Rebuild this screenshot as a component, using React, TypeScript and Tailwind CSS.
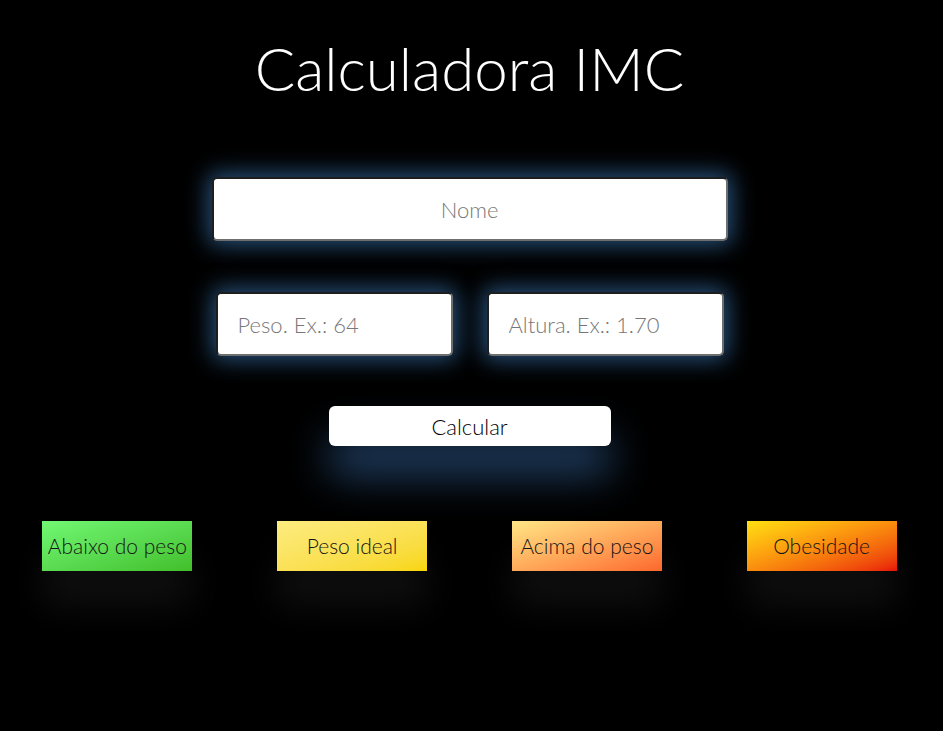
import React from 'react';

const categorias = [
  { label: 'Abaixo do peso', cls: 'bg-gradient-to-br from-[#72f873] to-[#42bf29]' },
  { label: 'Peso ideal', cls: 'bg-gradient-to-br from-[#fdec7f] to-[#f8d600]' },
  { label: 'Acima do peso', cls: 'bg-gradient-to-br from-[#ffe686] to-[#fb672c]' },
  { label: 'Obesidade', cls: 'bg-gradient-to-br from-[#fde012] to-[#e80a0a]' },
];

const inputCls =
  'h-[64px] rounded-[5px] border-2 border-t-[#1e1e1e] border-l-[#1e1e1e] border-b-[#6e6e6e] border-r-[#6e6e6e] bg-white text-[22px] text-black placeholder:text-[#777] outline-none shadow-[0_0_22px_4px_rgba(55,115,175,0.7)]';

export default function App() {
  return (
    <div className="min-h-[731px] w-full bg-black font-['Lato','Noto_Sans',sans-serif] font-light text-white overflow-hidden">
      <div className="w-[939px]">
        {/* Title */}
        <h1 className="pt-[30px] text-center text-[60px] leading-[76px] font-light">
          Calculadora IMC
        </h1>

        {/* Form */}
        <div className="mt-[71px] flex flex-col items-center">
          <input type="text" placeholder="Nome" className={`w-[516px] text-center ${inputCls}`} />

          <div className="mt-[51px] flex gap-[34px]">
            <input type="text" placeholder="Peso. Ex.: 64" className={`w-[237px] pl-[20px] ${inputCls}`} />
            <input type="text" placeholder="Altura. Ex.: 1.70" className={`w-[237px] pl-[20px] ${inputCls}`} />
          </div>

          <button
            type="button"
            className="mt-[50px] w-[282px] h-[40px] rounded-[6px] bg-white text-[22px] text-black shadow-[0_30px_40px_rgba(45,90,140,0.7)]"
          >
            Calcular
          </button>
        </div>

        {/* Categories */}
        <div className="mt-[75px] flex justify-around">
          {categorias.map((c) => (
            <div
              key={c.label}
              className={`w-[150px] h-[50px] flex items-center justify-center text-[21px] text-[#141414] shadow-[0_35px_35px_rgba(255,255,255,0.06)] ${c.cls}`}
            >
              {c.label}
            </div>
          ))}
        </div>
      </div>
    </div>
  );
}
